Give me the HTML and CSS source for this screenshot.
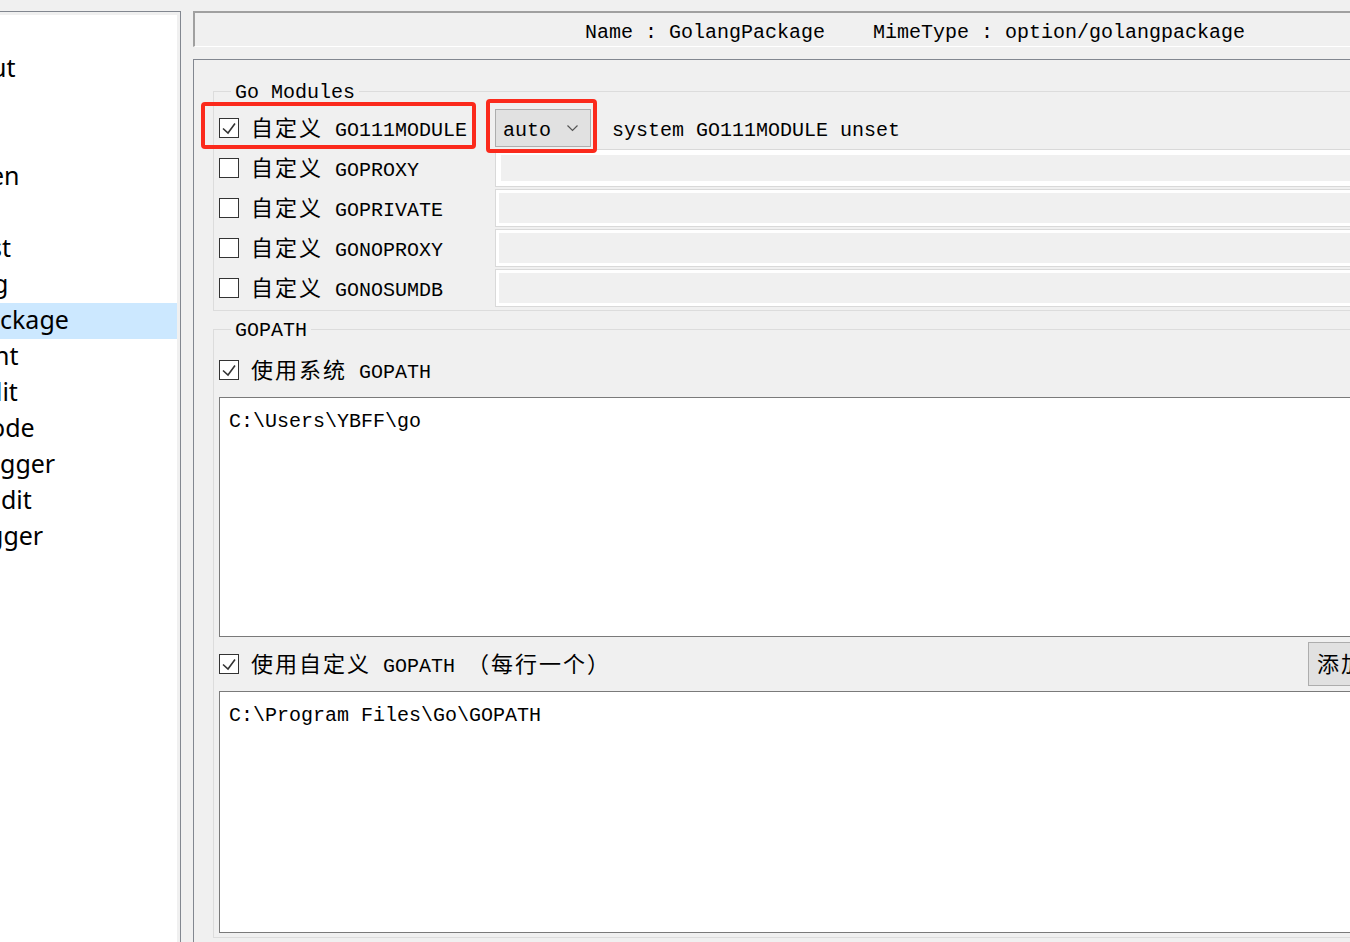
FILE: index.html
```html
<!DOCTYPE html>
<html lang="zh-CN">
<head>
<meta charset="utf-8">
<title>Options</title>
<link rel="stylesheet" href="styles.css">
</head>
<body>
<div class="app">
  <aside class="nav">
    <ul class="nav-list">
      <li class="nav-item"></li>
      <li class="nav-item"><span class="nav-text cut-9">ut</span></li>
      <li class="nav-item"></li>
      <li class="nav-item"></li>
      <li class="nav-item"><span class="nav-text cut-10">en</span></li>
      <li class="nav-item"></li>
      <li class="nav-item"><span class="nav-text cut-10">st</span></li>
      <li class="nav-item"><span class="nav-text cut-7">g</span></li>
      <li class="nav-item is-selected"><span class="nav-text">ckage</span></li>
      <li class="nav-item"><span class="nav-text cut-6">nt</span></li>
      <li class="nav-item"><span class="nav-text cut-13">dit</span></li>
      <li class="nav-item"><span class="nav-text cut-10">ode</span></li>
      <li class="nav-item"><span class="nav-text">gger</span></li>
      <li class="nav-item"><span class="nav-text cut-13">Edit</span></li>
      <li class="nav-item"><span class="nav-text cut-12">gger</span></li>
    </ul>
  </aside>

  <main class="main-col">
    <div class="header">Name : GolangPackage    MimeType : option/golangpackage</div>

    <section class="panel">
      <fieldset class="group group-modules">
        <legend class="group-title">Go Modules</legend>
        <div class="mod-grid">
          <div class="opt">
            <span class="cb is-checked"><svg width="18" height="18" viewBox="0 0 18 18"><polyline points="3,9.5 8,14 15,4.5" fill="none" stroke="#333" stroke-width="1.6"/></svg></span>
            <span class="opt-label"><span class="zh">自定义</span> GO111MODULE</span>
          </div>
          <div class="mod-ctrl">
            <div class="combo">
              <span class="combo-value">auto</span>
              <svg class="combo-arrow" width="11" height="7" viewBox="0 0 11 7"><polyline points="0.5,0.5 5.5,5.5 10.5,0.5" fill="none" stroke="#555" stroke-width="1.2"/></svg>
            </div>
            <span class="status">system GO111MODULE unset</span>
          </div>

          <div class="opt">
            <span class="cb"></span>
            <span class="opt-label"><span class="zh">自定义</span> GOPROXY</span>
          </div>
          <div class="field field-wide"><div class="field-inner"></div></div>

          <div class="opt">
            <span class="cb"></span>
            <span class="opt-label"><span class="zh">自定义</span> GOPRIVATE</span>
          </div>
          <div class="field"><div class="field-inner"></div></div>

          <div class="opt">
            <span class="cb"></span>
            <span class="opt-label"><span class="zh">自定义</span> GONOPROXY</span>
          </div>
          <div class="field"><div class="field-inner"></div></div>

          <div class="opt">
            <span class="cb"></span>
            <span class="opt-label"><span class="zh">自定义</span> GONOSUMDB</span>
          </div>
          <div class="field"><div class="field-inner"></div></div>
        </div>
      </fieldset>

      <fieldset class="group group-gopath">
        <legend class="group-title">GOPATH</legend>
        <div class="opt check-row">
          <span class="cb is-checked"><svg width="18" height="18" viewBox="0 0 18 18"><polyline points="3,9.5 8,14 15,4.5" fill="none" stroke="#333" stroke-width="1.6"/></svg></span>
          <span class="opt-label"><span class="zh">使用系统</span> GOPATH</span>
        </div>
        <div class="text-box text-box-sys">C:\Users\YBFF\go</div>
        <div class="opt custom-row">
          <span class="cb is-checked"><svg width="18" height="18" viewBox="0 0 18 18"><polyline points="3,9.5 8,14 15,4.5" fill="none" stroke="#333" stroke-width="1.6"/></svg></span>
          <span class="opt-label"><span class="zh">使用自定义</span> GOPATH <span class="zh">（每行一个）</span></span>
          <button class="btn" type="button"><span class="zh">添加</span></button>
        </div>
        <div class="text-box text-box-custom">C:\Program Files\Go\GOPATH</div>
      </fieldset>
    </section>
  </main>
</div>

<div class="mark mark-check"></div>
<div class="mark mark-combo"></div>
</body>
</html>
```

FILE: styles.css
```css
* { box-sizing: border-box; }

html, body { margin: 0; padding: 0; }

body {
  width: 1350px;
  height: 942px;
  overflow: hidden;
  position: relative;
  background: #f0f0f0;
  color: #000;
  font-family: "Liberation Mono", monospace;
  font-size: 20px;
}

.app {
  display: flex;
  height: 100%;
}

/* ---------- left list ---------- */
.nav {
  flex: none;
  width: 181px;
  margin-top: 11px;
  border-top: 1px solid #828790;
  border-right: 1px solid #828790;
  padding: 3px 3px 0 0;
  background: #f0f0f0;
}

.nav-list {
  list-style: none;
  margin: 0;
  padding: 0;
  height: 100%;
  background: #fff;
  overflow: hidden;
  font-family: "Noto Sans", sans-serif;
  font-size: 25px;
}

.nav-item {
  height: 36px;
  line-height: 32px;
  white-space: nowrap;
  overflow: hidden;
}

.nav-item.is-selected { background: #cce8ff; }

.nav-text { display: inline-block; }
.cut-6 { margin-left: -6px; }
.cut-7 { margin-left: -7px; }
.cut-9 { margin-left: -9px; }
.cut-10 { margin-left: -10px; }
.cut-12 { margin-left: -12px; }
.cut-13 { margin-left: -13px; }

/* ---------- right column ---------- */
.main-col {
  flex: none;
  width: 1206px;
  margin-left: 12px;
  display: flex;
  flex-direction: column;
}

.header {
  flex: none;
  margin-top: 11px;
  height: 36px;
  border-top: 2px solid #a0a0a0;
  border-left: 2px solid #a0a0a0;
  border-bottom: 1px solid #fff;
  border-right: 1px solid #fff;
  padding: 5px 0 0 390px;
  line-height: 30px;
  white-space: pre;
}

.panel {
  flex: 1;
  margin-top: 12px;
  border-top: 1px solid #828790;
  border-left: 1px solid #828790;
  padding: 19px 19px 0 19px;
}

.zh {
  font-family: "Noto Sans CJK SC", sans-serif;
  font-size: 22px;
  letter-spacing: 2px;
}

/* ---------- group boxes ---------- */
.group {
  margin: 0;
  min-width: 0;
  border: 1px solid #dcdcdc;
  padding: 6px 5px 3px 5px;
}

.group-title {
  margin-left: 12px;
  padding: 4px 4px 0 4px;
  height: 24px;
  line-height: 20px;
}

.group-gopath {
  margin-top: 6px;
  padding: 11px 5px 4px 5px;
}

.mod-grid {
  display: grid;
  grid-template-columns: 276px 1fr;
  grid-auto-rows: 38px;
  row-gap: 2px;
}

.opt {
  display: flex;
  align-items: center;
  gap: 12px;
  white-space: pre;
  line-height: 24px;
}

.cb {
  flex: none;
  width: 20px;
  height: 20px;
  border: 1px solid #333;
  background: #fff;
  display: flex;
  align-items: center;
  justify-content: center;
}

.cb svg { display: block; }

.mod-ctrl {
  display: flex;
  align-items: center;
  padding-top: 4px;
}

.combo {
  flex: none;
  width: 96px;
  height: 38px;
  margin-top: -4px;
  background: #e1e1e1;
  border: 1px solid #adadad;
  display: flex;
  align-items: center;
  padding: 4px 0 0 7px;
}

.combo-arrow {
  display: block;
  margin-left: 16px;
  margin-top: -4px;
}

.status {
  margin-left: 21px;
  white-space: pre;
}

.field {
  border: 1px solid #d9d9d9;
  background: #fff;
  padding: 3px;
}

.field-wide { padding: 5px; }

.field-inner {
  height: 100%;
  background: #f0f0f0;
}

/* ---------- GOPATH ---------- */
.check-row { height: 36px; }

.text-box {
  border: 1px solid #7a7a7a;
  background: #fff;
  padding: 11px 9px 8px 9px;
  line-height: 26px;
  white-space: pre;
}

.text-box-sys {
  margin-top: 9px;
  height: 240px;
}

.custom-row {
  height: 44px;
  margin: 5px 0;
}

.btn {
  margin-left: auto;
  height: 44px;
  padding: 0 8px;
  border: 1px solid #adadad;
  background: #e1e1e1;
  color: #000;
  font: inherit;
  line-height: 24px;
}

.text-box-custom { height: 242px; }

/* ---------- annotation overlays ---------- */
.mark {
  position: absolute;
  border: 4px solid #fb2a1c;
  border-radius: 4px;
  pointer-events: none;
}

.mark-check {
  left: 201px;
  top: 102px;
  width: 275px;
  height: 47px;
}

.mark-combo {
  left: 486px;
  top: 99px;
  width: 111px;
  height: 54px;
}
```
